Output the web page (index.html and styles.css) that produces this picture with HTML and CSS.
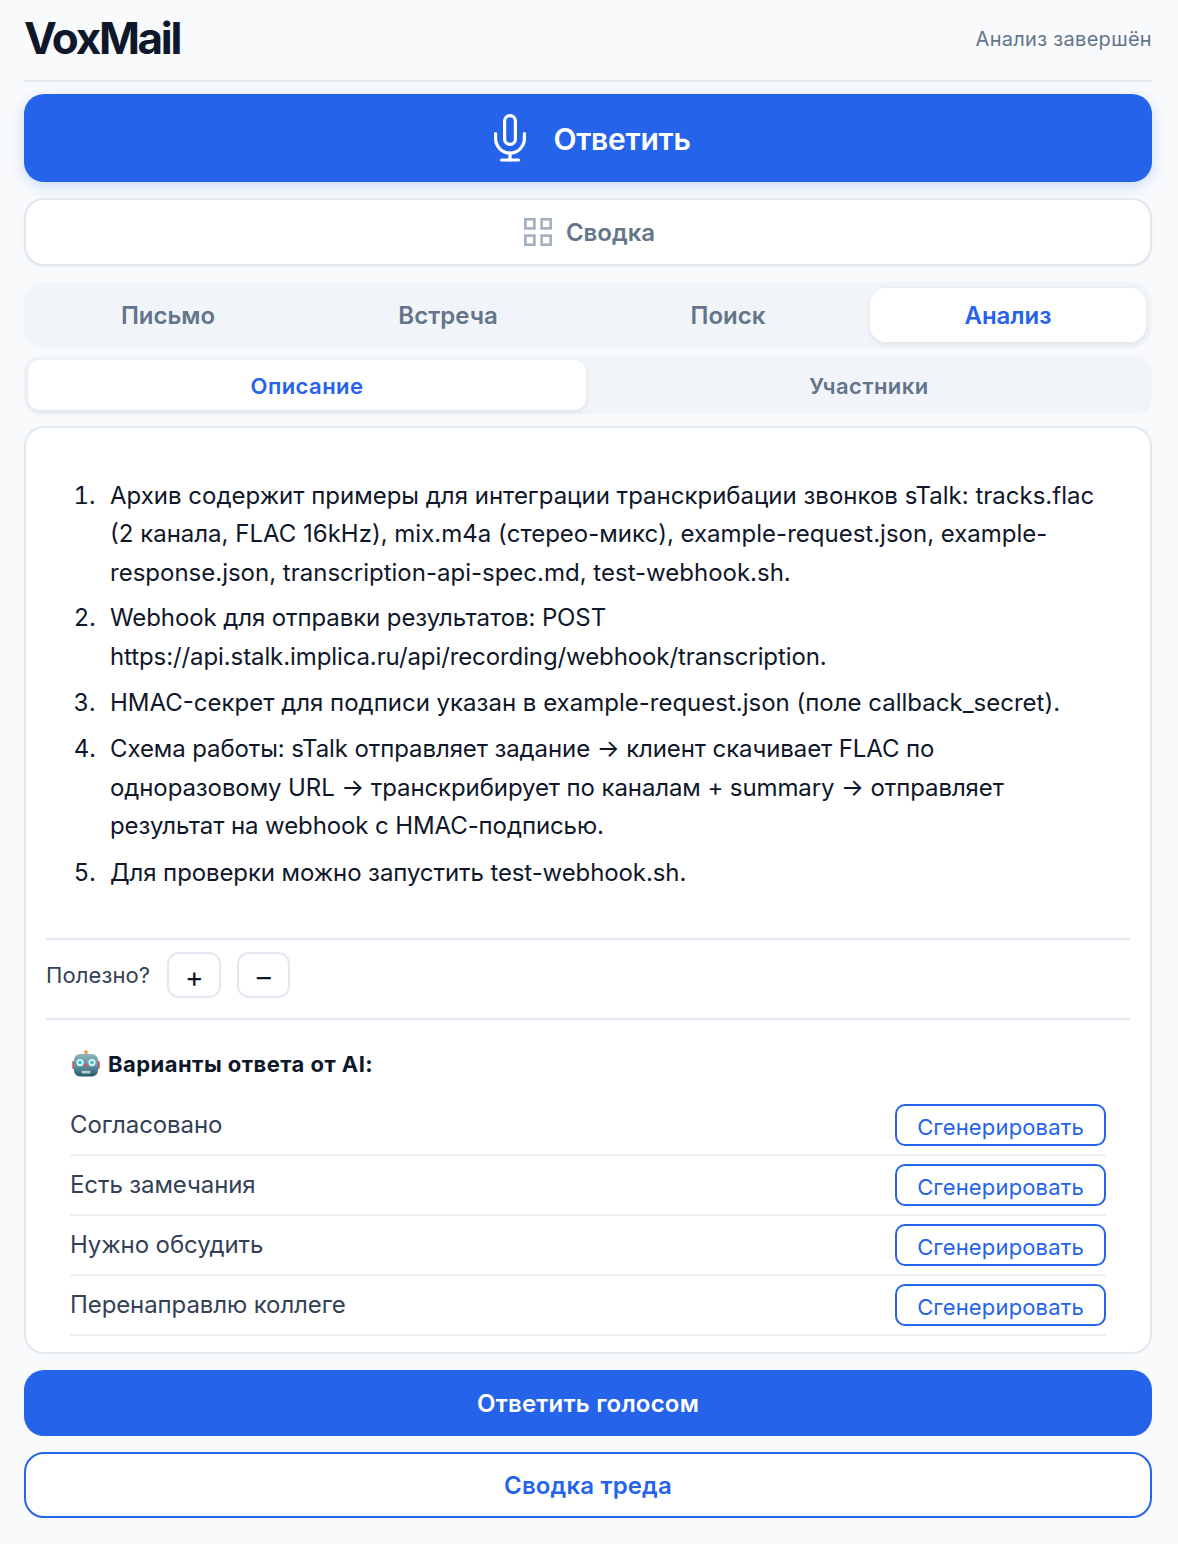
FILE: index.html
```html
<!DOCTYPE html>
<html lang="ru">
<head>
    <meta charset="UTF-8">
    <meta name="viewport" content="width=device-width, initial-scale=1.0">
    <title>VoxMail</title>
    <link rel="stylesheet" href="styles.css">
</head>
<body>
    <div class="app-container">
        <div class="header">
            <h1>VoxMail</h1>
            <p class="status">Анализ завершён</p>
        </div>

        <button class="record-btn">
            <svg class="mic-icon" viewBox="0 0 34 50" fill="none" stroke="#fff" stroke-width="3.2" stroke-linecap="round" stroke-linejoin="round">
                <rect x="11.6" y="2.6" width="10.8" height="28.8" rx="5.4"/>
                <path d="M2.6 20.6v5a14.4 14.4 0 0 0 28.8 0v-5"/>
                <path d="M17 40v7"/>
                <path d="M8.5 47h17"/>
            </svg>
            <span>Ответить</span>
        </button>

        <button class="summary-btn">
            <svg class="grid-icon" viewBox="0 0 28 28" fill="none" stroke="#a3afbf" stroke-width="2.6">
                <rect x="1.3" y="1.3" width="9.1" height="9.1"/>
                <rect x="17.6" y="1.3" width="9.1" height="9.1"/>
                <rect x="1.3" y="17.6" width="9.1" height="9.1"/>
                <rect x="17.6" y="17.6" width="9.1" height="9.1"/>
            </svg>
            <span>Сводка</span>
        </button>

        <div class="tabs">
            <button class="tab">Письмо</button>
            <button class="tab">Встреча</button>
            <button class="tab">Поиск</button>
            <button class="tab active">Анализ</button>
        </div>

        <div class="subtabs">
            <button class="subtab active">Описание</button>
            <button class="subtab">Участники</button>
        </div>

        <div class="card">
            <ol class="analysis-list">
                <li>Архив содержит примеры для интеграции транскрибации звонков sTalk: tracks.flac (2 канала, FLAC 16kHz), mix.m4a (стерео-микс), example-request.json, example-response.json, transcription-api-spec.md, test-webhook.sh.</li>
                <li class="tight">Webhook для отправки результатов: POST https://api.stalk.implica.ru/api/recording/webhook/transcription.</li>
                <li>HMAC-секрет для подписи указан в example-request.json (поле callback_secret).</li>
                <li class="tight">Схема работы: sTalk отправляет задание → клиент скачивает FLAC по одноразовому URL → транскрибирует по каналам + summary → отправляет результат на webhook с HMAC-подписью.</li>
                <li class="tight">Для проверки можно запустить test-webhook.sh.</li>
            </ol>

            <div class="feedback">
                <span class="feedback-label">Полезно?</span>
                <button class="vote">+</button>
                <button class="vote">–</button>
            </div>

            <div class="replies">
                <h3>
                    <svg class="robot" viewBox="0 0 28 28">
                        <defs>
                            <linearGradient id="robotHead" x1="0" y1="0" x2="0" y2="1">
                                <stop offset="0" stop-color="#8fb3ba"/>
                                <stop offset="0.55" stop-color="#5c929f"/>
                                <stop offset="1" stop-color="#24586a"/>
                            </linearGradient>
                        </defs>
                        <rect x="12.8" y="2" width="2.4" height="3" fill="#8a9aa3"/>
                        <circle cx="14" cy="1.9" r="1.9" fill="#f2a93b"/>
                        <rect x="0.3" y="11" width="3" height="8" rx="1" fill="#c9544a"/>
                        <rect x="24.7" y="11" width="3" height="8" rx="1" fill="#c9544a"/>
                        <rect x="2" y="4" width="24" height="22.5" rx="6" fill="url(#robotHead)"/>
                        <circle cx="8" cy="12.6" r="3.6" fill="#dff6fb"/>
                        <circle cx="20" cy="12.6" r="3.6" fill="#dff6fb"/>
                        <circle cx="8" cy="12.6" r="1.8" fill="#35b8e0"/>
                        <circle cx="20" cy="12.6" r="1.8" fill="#35b8e0"/>
                        <path d="M14 12.5l2.2 4h-4.4z" fill="#d9534a"/>
                        <rect x="9.5" y="20.8" width="9" height="2.6" rx="1" fill="#b9c7cc"/>
                    </svg>
                    Варианты ответа от AI:
                </h3>
                <div class="reply-row">
                    <span>Согласовано</span>
                    <button class="generate">Сгенерировать</button>
                </div>
                <div class="reply-row">
                    <span>Есть замечания</span>
                    <button class="generate">Сгенерировать</button>
                </div>
                <div class="reply-row">
                    <span>Нужно обсудить</span>
                    <button class="generate">Сгенерировать</button>
                </div>
                <div class="reply-row">
                    <span>Перенаправлю коллеге</span>
                    <button class="generate">Сгенерировать</button>
                </div>
            </div>
        </div>

        <button class="voice-btn">Ответить голосом</button>
        <button class="thread-btn">Сводка треда</button>
    </div>
</body>
</html>
```

FILE: styles.css
```css
* {
    margin: 0;
    padding: 0;
    box-sizing: border-box;
}

:root {
    --primary-color: #2563eb;
    --border-color: #e2e8f0;
    --text-dark: #0f172a;
    --text-muted: #64748b;
    --text-body: #334155;
}

body {
    font-family: Inter, "Liberation Sans", sans-serif;
    background-color: #f8fafc;
    color: var(--text-dark);
}

button {
    font-family: inherit;
    cursor: pointer;
}

/* Main container */
.app-container {
    display: flex;
    flex-direction: column;
    padding: 0 26px 0 24px;
}

/* Header */
.header {
    display: flex;
    justify-content: space-between;
    align-items: center;
    height: 82px;
    padding-bottom: 4px;
    border-bottom: 2px solid var(--border-color);
    margin-bottom: 12px;
}

.header h1 {
    font-size: 44px;
    font-weight: 700;
    letter-spacing: -2.3px;
    line-height: 1;
}

.status {
    font-size: 20px;
    letter-spacing: 0.3px;
    padding-top: 2px;
    color: var(--text-muted);
}

/* Big buttons */
.record-btn {
    display: flex;
    align-items: center;
    justify-content: center;
    gap: 26px;
    height: 88px;
    padding-left: 8px;
    border: none;
    border-radius: 20px;
    background: var(--primary-color);
    color: #fff;
    font-size: 30px;
    font-weight: 600;
    letter-spacing: -0.25px;
    box-shadow: 0 4px 14px rgba(37, 99, 235, 0.2);
    margin-bottom: 16px;
}

.record-btn span {
    padding-top: 2px;
}

.mic-icon {
    width: 34px;
    height: 50px;
}

.summary-btn {
    display: flex;
    align-items: center;
    justify-content: center;
    gap: 14px;
    height: 68px;
    padding-left: 3px;
    border: 2px solid var(--border-color);
    border-radius: 20px;
    background: #fff;
    color: var(--text-muted);
    font-size: 24px;
    font-weight: 600;
    box-shadow: 0 1px 3px rgba(0, 0, 0, 0.05);
    margin-bottom: 16px;
}

.grid-icon {
    width: 28px;
    height: 28px;
}

/* Tabs */
.tabs {
    display: grid;
    grid-template-columns: repeat(4, 1fr);
    gap: 4px;
    padding: 6px;
    background: #f1f5f9;
    border-radius: 20px;
    margin-bottom: 8px;
}

.tab {
    height: 54px;
    border: none;
    border-radius: 16px;
    background: transparent;
    color: var(--text-muted);
    font-size: 24px;
    font-weight: 600;
}

.tab.active {
    background: #fff;
    color: var(--primary-color);
    box-shadow: 0 2px 6px rgba(0, 0, 0, 0.08);
}

.subtabs {
    display: grid;
    grid-template-columns: 558px 1fr;
    gap: 4px;
    padding: 4px;
    background: #f1f5f9;
    border-radius: 16px;
    margin-bottom: 12px;
}

.subtab {
    height: 50px;
    padding-top: 2px;
    border: none;
    border-radius: 12px;
    background: transparent;
    color: var(--text-muted);
    font-size: 22px;
    font-weight: 600;
    letter-spacing: 0.45px;
}

.subtab.active {
    background: #fff;
    color: var(--primary-color);
    box-shadow: 0 2px 6px rgba(0, 0, 0, 0.08);
}

/* Card */
.card {
    background: #fff;
    border: 2px solid var(--border-color);
    border-radius: 20px;
    padding: 0 20px 16px;
    margin-bottom: 16px;
}

.analysis-list {
    padding: 49px 30px 46px 56px;
    font-size: 24px;
    line-height: 38.4px;
}

.analysis-list li {
    margin-bottom: 8px;
    padding-left: 8px;
}

.analysis-list li:first-child {
    margin-bottom: 7px;
}

.analysis-list li:last-child {
    margin-bottom: 0;
}

.analysis-list .tight {
    letter-spacing: -0.1px;
}

.feedback {
    display: flex;
    align-items: center;
    gap: 16px;
    height: 82px;
    padding-bottom: 8px;
    border-top: 2px solid var(--border-color);
    border-bottom: 2px solid var(--border-color);
    font-size: 22px;
    letter-spacing: 0.1px;
    color: var(--text-body);
}

.feedback-label {
    margin-right: 1px;
}

.vote {
    width: 54px;
    height: 46px;
    padding-top: 3px;
    border: 2px solid var(--border-color);
    border-radius: 12px;
    background: #fff;
    color: var(--text-dark);
    font-size: 28px;
}

.vote + .vote {
    width: 53px;
}

.replies {
    padding: 30px 24px 0;
}

.replies h3 {
    display: flex;
    align-items: center;
    gap: 8px;
    padding-left: 2px;
    font-size: 22px;
    font-weight: 700;
    letter-spacing: 0.45px;
    margin-bottom: 18px;
}

.robot {
    width: 28px;
    height: 28px;
}

.reply-row {
    display: flex;
    justify-content: space-between;
    align-items: center;
    height: 60px;
    border-bottom: 2px solid #f0f1f3;
    font-size: 24px;
    letter-spacing: -0.1px;
    color: var(--text-body);
}

.reply-row span {
    padding-bottom: 1px;
}

.generate {
    width: 211px;
    height: 42px;
    padding-top: 3px;
    border: 2px solid var(--primary-color);
    border-radius: 10px;
    background: #fff;
    color: var(--primary-color);
    font-size: 22px;
    letter-spacing: 0.15px;
}

/* Bottom buttons */
.voice-btn {
    height: 66px;
    border: none;
    border-radius: 20px;
    background: var(--primary-color);
    color: #fff;
    font-size: 24px;
    font-weight: 600;
    letter-spacing: 0.2px;
    margin-bottom: 16px;
}

.thread-btn {
    height: 66px;
    border: 2px solid var(--primary-color);
    border-radius: 20px;
    background: #fff;
    color: var(--primary-color);
    font-size: 24px;
    font-weight: 600;
    letter-spacing: 0.15px;
}
```
